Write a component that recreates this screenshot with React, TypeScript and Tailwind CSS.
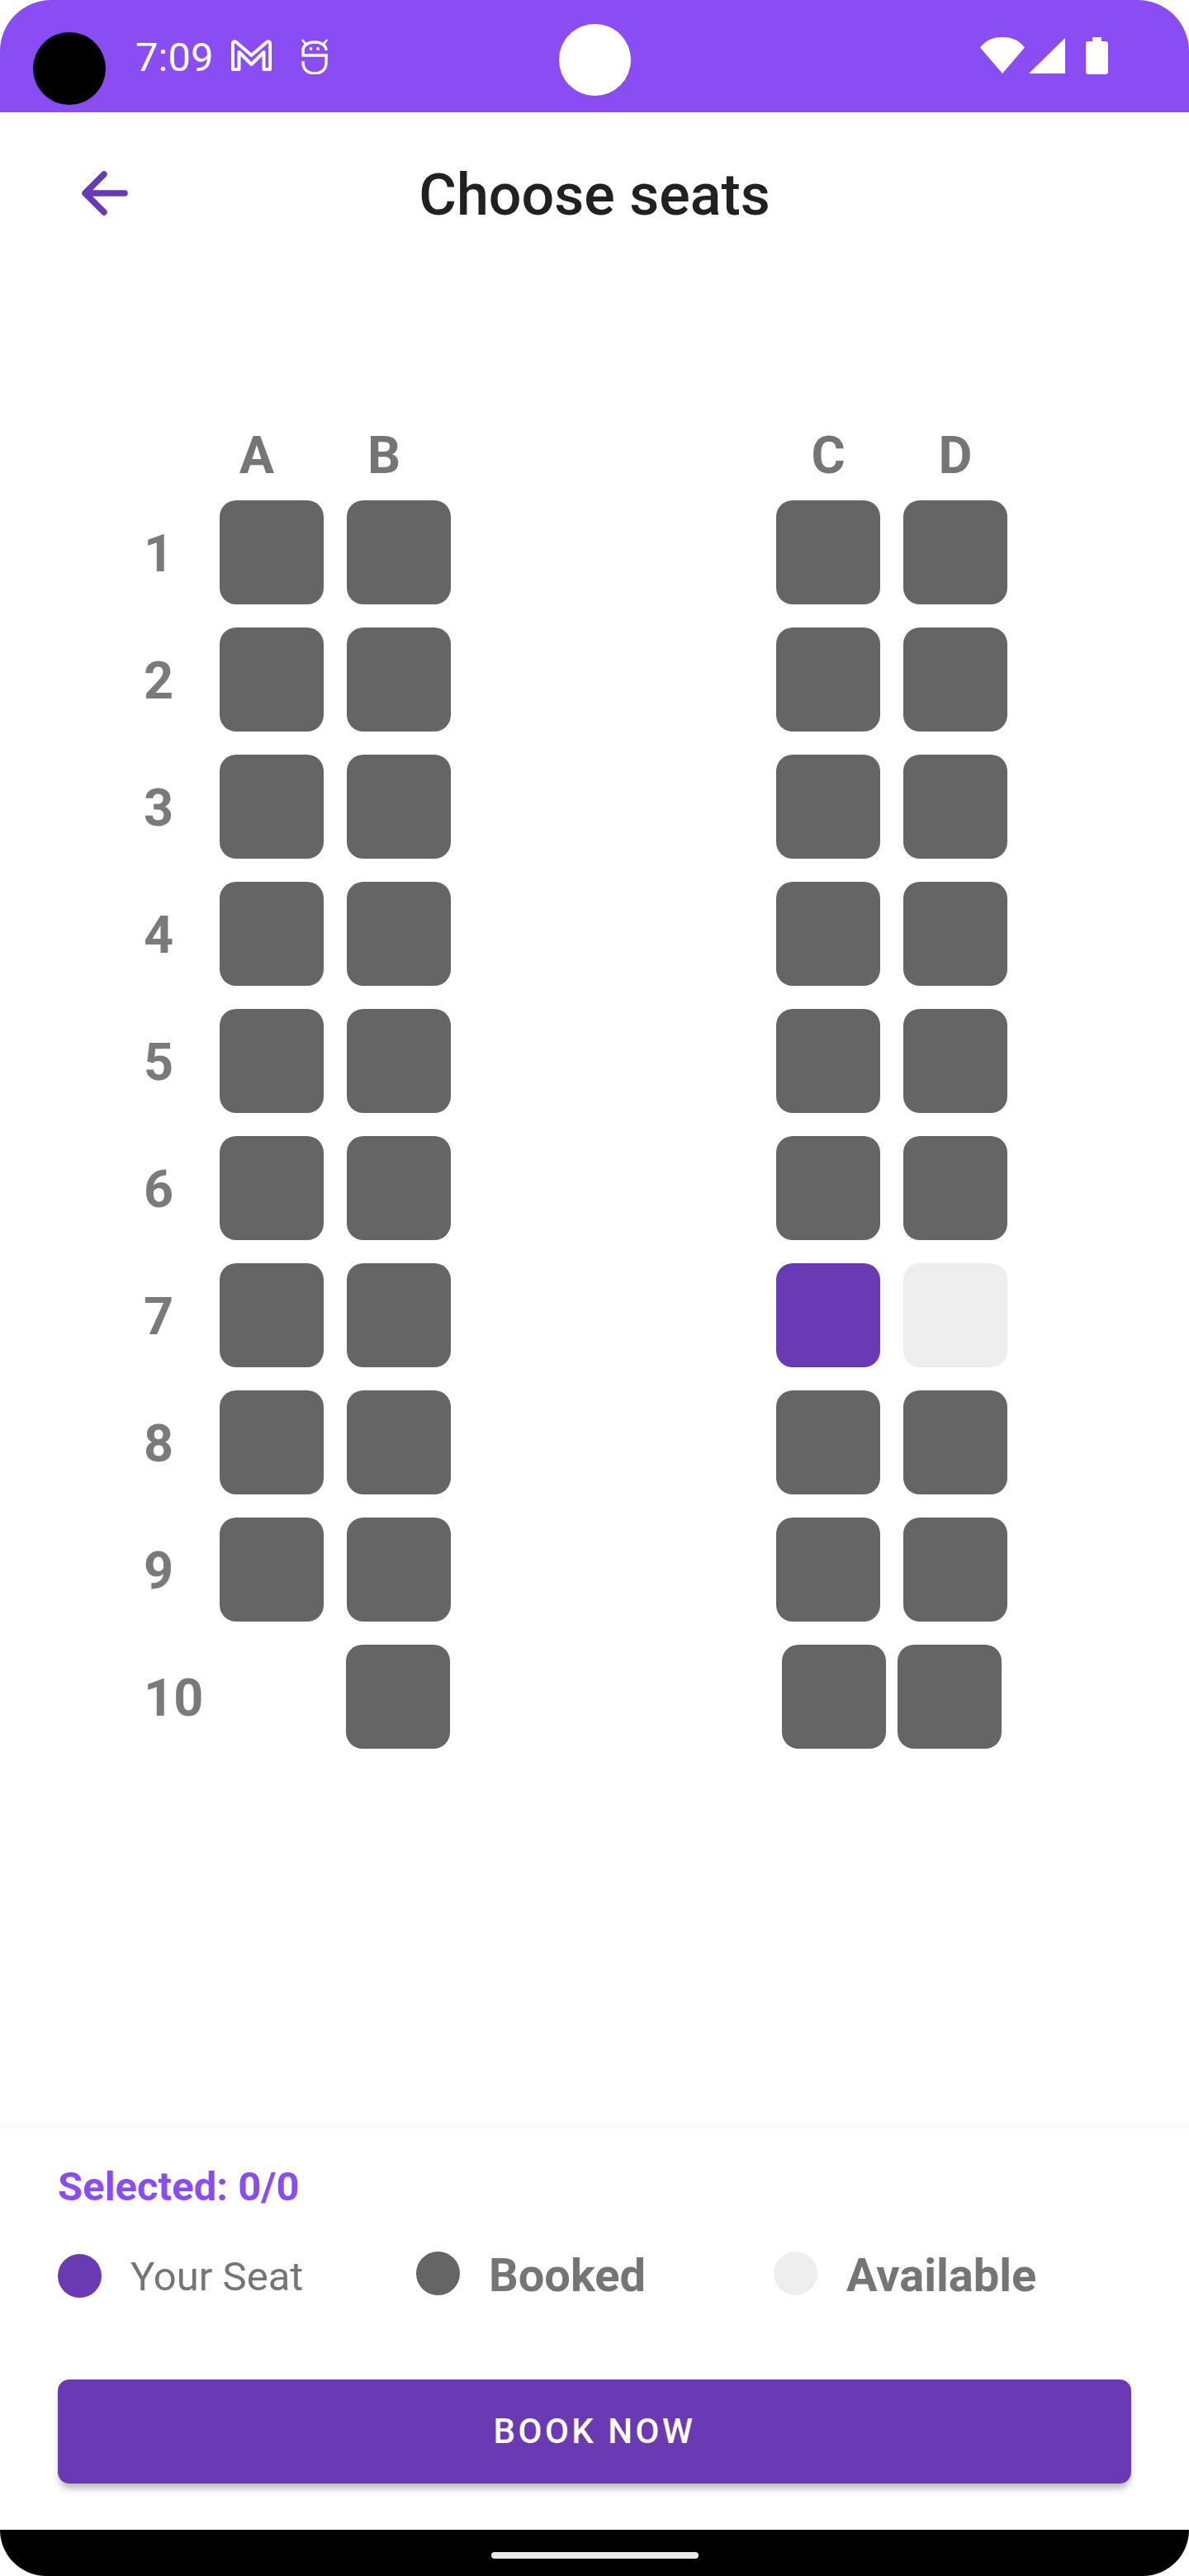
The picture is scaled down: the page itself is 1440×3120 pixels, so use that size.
const FONT = "font-['Roboto',sans-serif]";

function Seat({ kind = "booked", className = "" }: { kind?: "booked" | "mine" | "free"; className?: string }) {
  const bg = kind === "booked" ? "bg-[#656565]" : kind === "mine" ? "bg-[#6a3ab5]" : "bg-[#eeeeee]";
  return <div className={`h-[126px] w-[126px] shrink-0 rounded-[20px] ${bg} ${className}`} />;
}

function RowLabel({ n }: { n: number }) {
  return <div className="w-[92px] shrink-0 pt-[4px] text-[63px] leading-[74px] font-bold text-[#7a7a7a]">{n}</div>;
}

function Row({ n }: { n: number }) {
  return (
    <div className="flex items-center pl-[174px]">
      <RowLabel n={n} />
      <Seat />
      <Seat className="ml-[28px]" />
      <Seat kind={n === 7 ? "mine" : "booked"} className="ml-[394px]" />
      <Seat kind={n === 7 ? "free" : "booked"} className="ml-[28px]" />
    </div>
  );
}

function LastRow() {
  return (
    <div className="flex items-center pl-[174px]">
      <RowLabel n={10} />
      <div className="h-[126px] w-[126px] shrink-0" />
      <Seat className="ml-[27px]" />
      <Seat className="ml-[402px]" />
      <Seat className="ml-[14px]" />
    </div>
  );
}

function ColLabel({ c, className = "" }: { c: string; className?: string }) {
  return <div className={`w-[126px] shrink-0 text-center text-[63px] leading-[74px] font-bold text-[#757575] ${className}`}>{c}</div>;
}

function Legend({ dot, label, bold }: { dot: string; label: string; bold?: boolean }) {
  return (
    <div className="flex items-center">
      <div className={bold ? `mb-[6px] h-[53px] w-[53px] shrink-0 rounded-full ${dot}` : `h-[53px] w-[53px] shrink-0 rounded-full ${dot}`} />
      <span className={bold ? "ml-[35px] text-[56px] leading-[66px] font-bold text-[#757575]" : "ml-[35px] pt-[4px] text-[49px] leading-[58px] font-normal text-[#757575]"}>{label}</span>
    </div>
  );
}

export default function App() {
  const rows = [1, 2, 3, 4, 5, 6, 7, 8, 9];
  return (
    <div className={`flex h-[3120px] w-[1440px] flex-col overflow-hidden bg-white ${FONT}`}>
      <div className="grid h-[136px] shrink-0 grid-cols-[1fr_auto_1fr] rounded-t-[62px] bg-[#8a4df4] text-white">
        <div className="flex items-start pl-[40px]">
          <div className="mt-[39px] h-[88px] w-[88px] rounded-full bg-black" />
          <span className="ml-[36px] mt-[41px] text-[49px] leading-[58px] font-normal">7:09</span>
          <svg className="ml-[22px] mt-[48px]" width="49" height="38" viewBox="0 0 49 38" fill="none" stroke="white" strokeWidth="4" strokeLinejoin="round">
            <path d="M2 36 V5 Q2 1 6 3 L24.5 19 L43 3 Q47 1 47 5 V36 H39.5 V15 L24.5 30 L9.5 15 V36 Z" />
          </svg>
          <svg className="ml-[36px] mt-[46px]" width="32" height="44" viewBox="0 0 32 44" fill="none" stroke="white" strokeWidth="3.4">
            <path d="M30 15 C30 9 24 5 16 5 C8 5 2 9 2 15 V21 H30 V30 C30 38 24 43 16 43 C8 43 2 38 2 30 V28" />
            <path d="M1.5 3 L5 7 M30.5 3 L27 7" strokeWidth="2.6" strokeLinecap="round" />
            <circle cx="11.5" cy="13" r="1.9" fill="white" stroke="none" />
            <circle cx="20" cy="13" r="1.9" fill="white" stroke="none" />
          </svg>
        </div>
        <div className="mt-[29px] h-[87px] w-[87px] rounded-full bg-white" />
        <div className="flex items-start justify-end pr-[98px]">
          <svg className="mt-[45px]" width="155" height="45" viewBox="0 0 155 45" fill="white">
            <path d="M0 12.5 C8 3 16 0 27 0 C38 0 46 3 54 12.5 L27 44 Z" />
            <path d="M103 1 V44 H59 Z" />
            <path d="M136 0 H147 V5 H152 Q155 5 155 8 V42 Q155 45 152 45 H131 Q128 45 128 42 V8 Q128 5 131 5 H136 Z" />
          </svg>
        </div>
      </div>

      <div className="relative flex h-[200px] shrink-0 items-center justify-center">
        <svg className="absolute left-[96px] top-[67px]" width="62" height="62" viewBox="0 0 62 62" fill="none" stroke="#673ab7" strokeWidth="7.5" strokeLinecap="round" strokeLinejoin="round">
          <path d="M30 8 L7 31 L30 54 M7 31 H55" />
        </svg>
        <h1 className="text-[70px] leading-[82px] font-medium text-[#212121]">Choose seats</h1>
      </div>

      <div className="flex pl-[248px] pt-[179px]">
        <ColLabel c="A" />
        <ColLabel c="B" className="ml-[28px]" />
        <ColLabel c="C" className="ml-[412px]" />
        <ColLabel c="D" className="ml-[28px]" />
      </div>

      <div className="mt-[17px] flex flex-col gap-[28px]">
        {rows.map((n) => (
          <Row key={n} n={n} />
        ))}
        <LastRow />
      </div>

      <div className="mt-[455px] h-[5px] shrink-0 bg-[#fafafa]" />

      <div className="flex flex-1 flex-col px-[70px]">
        <div className="mt-[42px] text-[49px] leading-[58px] font-bold text-[#8a4df4]">Selected: 0/0</div>
        <div className="mt-[45px] grid grid-cols-[434px_433px_1fr] items-center">
          <Legend dot="bg-[#6a3ab5]" label="Your Seat" />
          <Legend dot="bg-[#656565]" label="Booked" bold />
          <Legend dot="bg-[#eeeeee]" label="Available" bold />
        </div>
        <button className="mt-[93px] flex h-[126px] w-[1300px] items-center justify-center rounded-[14px] bg-[#6a3ab5] text-[42px] leading-[50px] font-medium tracking-[3.5px] text-white shadow-[0_8px_8px_-2px_rgba(0,0,0,0.28)]">
          BOOK NOW
        </button>
      </div>

      <div className="flex h-[56px] shrink-0 items-start justify-center rounded-b-[62px] bg-black pt-[27px]">
        <div className="h-[8px] w-[251px] rounded-full bg-[#e8e8e8]" />
      </div>
    </div>
  );
}
